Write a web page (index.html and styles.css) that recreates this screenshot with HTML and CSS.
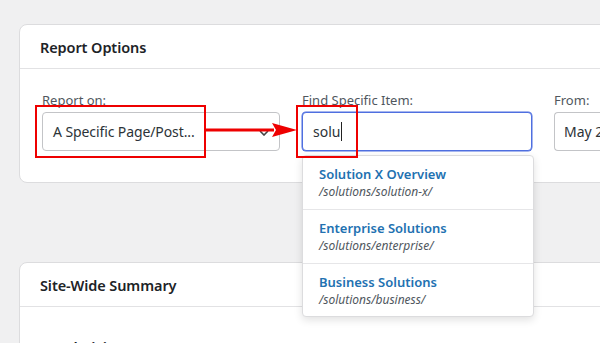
FILE: index.html
```html
<!DOCTYPE html>
<html>
<head>
<meta charset="utf-8">
<link rel="stylesheet" href="styles.css">
</head>
<body>
<div class="page">
  <section class="card card-options">
    <header class="card-head">Report Options</header>
    <div class="card-body">
      <div class="field field-report">
        <label class="label">Report on:</label>
        <div class="select">
          <span class="select-text">A Specific Page/Post...</span>
          <svg class="chev" width="10" height="6" viewBox="0 0 10 6"><path d="M1 1l4 4 4-4" fill="none" stroke="#444" stroke-width="1.6"/></svg>
        </div>
      </div>
      <div class="field field-find">
        <label class="label">Find Specific Item:</label>
        <div class="input input-focus"><span>solu</span><span class="caret"></span></div>
        <ul class="suggest">
          <li class="suggest-item"><span class="s-title">Solution X Overview</span><span class="s-path">/solutions/solution-x/</span></li>
          <li class="suggest-item"><span class="s-title">Enterprise Solutions</span><span class="s-path">/solutions/enterprise/</span></li>
          <li class="suggest-item"><span class="s-title">Business Solutions</span><span class="s-path">/solutions/business/</span></li>
        </ul>
      </div>
      <div class="field field-from">
        <label class="label">From:</label>
        <div class="input"><span>May 2</span></div>
      </div>
    </div>
  </section>

  <section class="card card-summary">
    <header class="card-head">Site-Wide Summary</header>
    <div class="card-body summary-body">
      <div class="metric">Total Visits</div>
    </div>
  </section>
</div>

<div class="mark mark-one"></div>
<div class="mark mark-two"></div>
<div class="arrow">
  <svg width="92" height="14" viewBox="0 0 92 14"><rect x="0" y="5.5" width="68" height="3" fill="#ee0000"/><path d="M66 0L91 7L66 14L70 7Z" fill="#ee0000"/></svg>
</div>
</body>
</html>
```
FILE: styles.css
```css
* { box-sizing: border-box; }
html, body { margin: 0; padding: 0; }
body {
  background: #f0f0f1;
  font-family: "Noto Sans", "Open Sans", sans-serif;
  color: #1d2327;
  width: 600px;
  height: 343px;
  overflow: hidden;
  position: relative;
}
.page {
  padding: 24px 0 0 19px;
  display: flex;
  flex-direction: column;
  gap: 79px;
  width: 700px;
}
.card {
  background: #fff;
  border: 1px solid #dcdcde;
  border-radius: 8px;
  width: 681px;
}
.card-head {
  height: 44px;
  border-bottom: 1px solid #e2e2e4;
  padding: 0 0 0 20px;
  display: flex;
  align-items: center;
  font-size: 14.5px;
  font-weight: 600;
  letter-spacing: -0.1px;
}
.card-options .card-body {
  display: flex;
  gap: 22px;
  padding: 22px 0 31px 22px;
}
.field { display: flex; flex-direction: column; gap: 3px; }
.field-report { width: 238px; }
.field-find { width: 230px; position: relative; }
.field-from { width: 140px; }
.label {
  font-size: 13px;
  color: #50575e;
  line-height: 18px;
  height: 18px;
}
.select, .input {
  height: 39px;
  border: 1px solid #c3c4c7;
  border-radius: 4px;
  display: flex;
  align-items: center;
  padding: 0 12px 0 10px;
  font-size: 14px;
  color: #2c3338;
  background: #fff;
}
.select { justify-content: space-between; padding-right: 10px; }
.select-text { letter-spacing: -0.1px; }
.chev { margin-top: 2px; }
.input-focus {
  border-color: #4f6fe0;
  box-shadow: 0 0 0 0.5px #4f6fe0;
  padding-left: 10px;
}
.caret {
  display: inline-block;
  width: 1px;
  height: 19px;
  background: #222;
  margin-left: 1px;
}
.field-from .input { padding-left: 9px; border-right: none; border-radius: 4px 0 0 4px; }
.suggest {
  position: absolute;
  top: 64px;
  left: 0;
  width: 232px;
  margin: 0;
  padding: 0;
  list-style: none;
  background: #fff;
  border: 1px solid #dcdcde;
  border-radius: 4px;
  box-shadow: 0 3px 8px rgba(0,0,0,0.12);
  z-index: 2;
}
.suggest-item {
  height: 54px;
  padding: 9px 16px 0 16px;
  display: flex;
  flex-direction: column;
  border-bottom: 1px solid #e6e6e8;
}
.suggest-item:last-child { border-bottom: none; height: 52px; }
.s-title {
  color: #2271b1;
  font-weight: 600;
  font-size: 13px;
  line-height: 18px;
}
.s-path {
  color: #50575e;
  font-style: italic;
  font-size: 12px;
  line-height: 17px;
}
.summary-body { padding: 30px 0 0 22px; height: 60px; }
.metric { font-size: 15px; font-weight: 600; }
.mark {
  position: absolute;
  border: 2px solid #ee0000;
  z-index: 3;
}
.mark-one { left: 35px; top: 105px; width: 171px; height: 53px; }
.mark-two { left: 296px; top: 105px; width: 62px; height: 53px; }
.arrow { position: absolute; left: 206px; top: 123px; z-index: 4; line-height: 0; }
```
